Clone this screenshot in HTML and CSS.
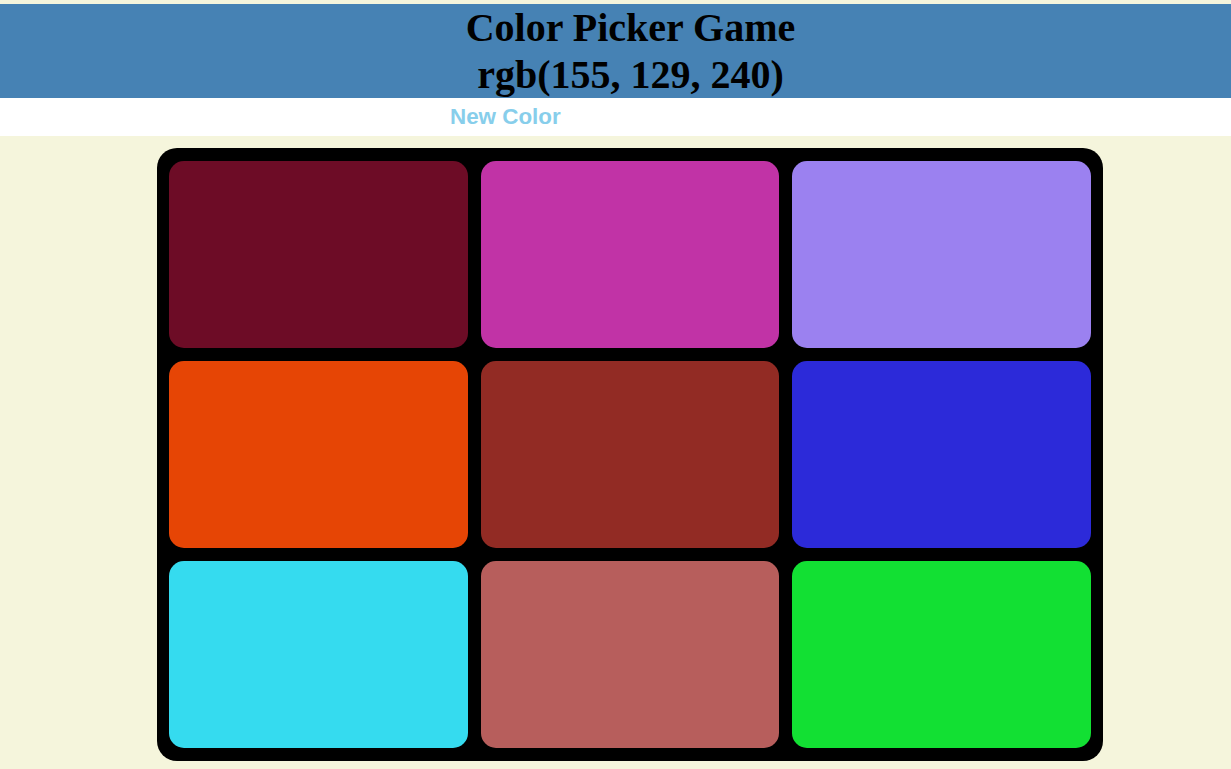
FILE: index.html
```html
<!DOCTYPE html>
<html>
<head>
<meta charset="utf-8">
<title>Color Picker Game</title>
<link rel="stylesheet" href="styles.css">
</head>
<body>
<header class="header">
  <h1 class="title">Color Picker Game<br><span class="target">rgb(155, 129, 240)</span></h1>
</header>
<div class="controls">
  <button class="new-color">New Color</button>
</div>
<main class="board-wrap">
  <div class="board">
    <div class="square" style="background: rgb(109, 12, 38)"></div>
    <div class="square" style="background: rgb(193, 51, 166)"></div>
    <div class="square" style="background: rgb(155, 129, 240)"></div>
    <div class="square" style="background: rgb(230, 69, 5)"></div>
    <div class="square" style="background: rgb(146, 43, 36)"></div>
    <div class="square" style="background: rgb(44, 42, 217)"></div>
    <div class="square" style="background: rgb(53, 219, 239)"></div>
    <div class="square" style="background: rgb(183, 94, 92)"></div>
    <div class="square" style="background: rgb(18, 224, 51)"></div>
  </div>
</main>
</body>
</html>
```
FILE: styles.css
```css
html, body {
  margin: 0;
  padding: 0;
}
body {
  background: #f5f5dc;
  padding-top: 4px;
  font-family: "Liberation Serif", serif;
}
.header {
  background: #4682b4;
  height: 94px;
  text-align: center;
  padding-left: 30px;
}
.title {
  margin: 0;
  font-size: 40px;
  line-height: 47px;
  font-weight: bold;
  color: #000;
}
.controls {
  background: #fff;
  height: 38px;
  display: flex;
  align-items: center;
  padding-left: 443px;
}
.new-color {
  background: none;
  border: none;
  padding: 0 7px;
  font-family: "Liberation Sans", Arial, sans-serif;
  font-weight: bold;
  font-size: 22.4px;
  color: #87ceeb;
  cursor: pointer;
}
.board-wrap {
  padding: 12px 0 8px 157px;
}
.board {
  width: 922px;
  background: #000;
  border-radius: 20px;
  padding: 13px 12px;
  display: grid;
  grid-template-columns: repeat(3, 1fr);
  grid-auto-rows: 187px;
  gap: 13px;
}
.square {
  border-radius: 15px;
}
```
